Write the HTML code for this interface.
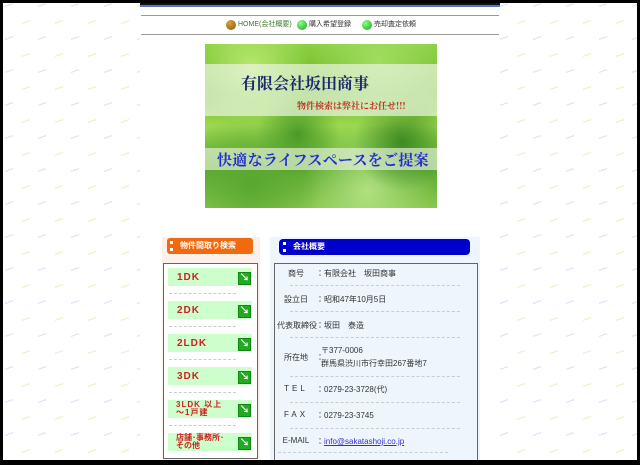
<!DOCTYPE html>
<html><head><meta charset="utf-8"><style>
*{margin:0;padding:0;box-sizing:border-box}
body{width:640px;height:465px;position:relative;overflow:hidden;background:#fff;font-family:"Liberation Sans","Noto Sans CJK JP",sans-serif;font-size:8px;color:#333}
.pat{position:absolute;inset:0;background-image:
linear-gradient(160deg,transparent 40%,#dfe6f8 40%,#dfe6f8 60%,transparent 60%),
linear-gradient(160deg,transparent 40%,#e6f5cc 40%,#e6f5cc 60%,transparent 60%);
background-size:8px 4px,8px 4px;background-repeat:no-repeat;}
.a{position:absolute}
.frame{position:absolute;inset:0;border:3px solid #000;border-bottom-width:5px;pointer-events:none}
.row{position:absolute;left:168px;width:84px;height:18px;background:#ccffcc;color:#d02020;font-weight:bold;font-size:10px;padding-left:9px;line-height:19px;letter-spacing:1px}
.row.two{font-size:8px;line-height:8px;padding-top:1px}
.arr{position:absolute;right:1px;top:4px;width:13px;height:13px;background:#22aa22;border:1px solid #118811;color:#fff;font-size:10px;line-height:11px;text-align:center;letter-spacing:0}
.dl{position:absolute;left:169px;width:67px;border-top:1px dashed #ccc}
.dr{position:absolute;left:290px;width:170px;border-top:1px dashed #ccc}
.lab{position:absolute;width:40px;text-align:center;left:276px}
.v{position:absolute;left:316px}
</style></head><body>
<div id="bg" class="pat"></div>
<div class="a" style="left:140px;top:0;width:360px;height:465px;background:#fff"></div>
<div class="a" style="left:140px;top:3px;width:360px;height:2px;background:#111"></div>
<div class="a" style="left:140px;top:5px;width:360px;height:1px;background:#4a9a3a"></div>
<div class="a" style="left:140px;top:6px;width:360px;height:1px;background:#6070d0"></div>
<div class="a" style="left:141px;top:15px;width:358px;height:1px;background:#999"></div>
<div class="a" style="left:141px;top:34px;width:358px;height:1px;background:#999"></div>
<div class="a" style="left:226px;top:20px;width:10px;height:10px;border-radius:50%;background:radial-gradient(circle at 35% 30%,#d8a040,#8a5a00)"></div>
<div class="a" style="left:238px;top:20px;font-size:7px;color:#3a7a2a;line-height:10px">HOME(会社概要)</div>
<div class="a" style="left:297px;top:20px;width:10px;height:10px;border-radius:50%;background:radial-gradient(circle at 35% 30%,#8f8,#1a1)"></div>
<div class="a" style="left:309px;top:20px;font-size:7px;line-height:10px">購入希望登録</div>
<div class="a" style="left:362px;top:20px;width:10px;height:10px;border-radius:50%;background:radial-gradient(circle at 35% 30%,#8f8,#1a1)"></div>
<div class="a" style="left:374px;top:20px;font-size:7px;line-height:10px">売却査定依頼</div>
<!-- banner -->
<div class="a" style="left:205px;top:44px;width:232px;height:164px;overflow:hidden;background:
radial-gradient(circle at 20% 15%,#b8e870 0,transparent 25%),
radial-gradient(circle at 75% 10%,#a0dc60 0,transparent 30%),
radial-gradient(circle at 40% 55%,#4a9a28 0,transparent 25%),
radial-gradient(circle at 85% 60%,#3e8a22 0,transparent 22%),
radial-gradient(circle at 20% 85%,#5aa830 0,transparent 30%),
radial-gradient(circle at 70% 90%,#b0e080 0,transparent 30%),
linear-gradient(180deg,#8cd040,#6ab828 30%,#9cd850 50%,#5aa830 75%,#8ac850)">
<div class="a" style="left:0;top:20px;width:232px;height:52px;background:rgba(235,245,225,.7)"></div>
<div class="a" style="left:0;top:104px;width:232px;height:22px;background:rgba(235,245,225,.65)"></div>
<div class="a" style="left:36px;top:27px;font-family:'Liberation Serif','Noto Serif CJK SC',serif;font-weight:bold;font-size:16px;color:#1a2a6a;white-space:nowrap">有限会社坂田商事</div>
<div class="a" style="left:92px;top:55px;font-family:'Noto Serif CJK SC',serif;font-weight:bold;font-size:9px;color:#c03020;white-space:nowrap">物件検索は弊社にお任せ!!!</div>
<div class="a" style="left:12px;top:105px;font-family:'Noto Serif CJK SC',serif;font-weight:bold;font-size:15px;color:#2030d0;white-space:nowrap;letter-spacing:.3px">快適なライフスペースをご提案</div>
</div>
<!-- left -->
<div class="a" style="left:162px;top:237px;width:98px;height:228px;background:#fdf0ea"></div>
<div class="a" style="left:167px;top:238px;width:86px;height:16px;background:#f06a10;border-radius:3px;color:#fff;font-weight:bold;font-size:8px;line-height:16px;padding-left:13px">物件間取り検索</div>
<div class="a" style="left:170px;top:241px;width:3px;height:3px;background:#fff"></div>
<div class="a" style="left:170px;top:248px;width:3px;height:3px;background:#fff"></div>
<div class="a" style="left:163px;top:263px;width:95px;height:196px;border:1px solid #666;background:#fff"></div>
<div class="row" style="top:268px">1DK<div class="arr">↘</div></div>
<div class="dl" style="top:293px"></div>
<div class="row" style="top:301px">2DK<div class="arr">↘</div></div>
<div class="dl" style="top:326px"></div>
<div class="row" style="top:334px">2LDK<div class="arr">↘</div></div>
<div class="dl" style="top:359px"></div>
<div class="row" style="top:367px">3DK<div class="arr">↘</div></div>
<div class="dl" style="top:392px"></div>
<div class="row two" style="top:400px;padding-left:8px">3LDK 以上<br>～1戸建<div class="arr">↘</div></div>
<div class="dl" style="top:425px"></div>
<div class="row two" style="top:433px;padding-left:8px;letter-spacing:0">店舗･事務所･<br>その他<div class="arr">↘</div></div>
<!-- right -->
<div class="a" style="left:270px;top:237px;width:210px;height:228px;background:#eef5fc"></div>
<div class="a" style="left:279px;top:239px;width:191px;height:16px;background:#0000cc;border-radius:4px;color:#fff;font-weight:bold;font-size:8px;line-height:16px;padding-left:14px">会社概要</div>
<div class="a" style="left:283px;top:242px;width:3px;height:3px;background:#fff"></div>
<div class="a" style="left:283px;top:249px;width:3px;height:3px;background:#fff"></div>
<div class="a" style="left:274px;top:263px;width:204px;height:202px;border:1px solid #666;border-bottom:none"></div>
<div class="lab" style="top:268px">商号</div><div class="v" style="top:268px">：有限会社　坂田商事</div>
<div class="dr" style="top:285px"></div>
<div class="lab" style="top:294px">設立日</div><div class="v" style="top:294px">：昭和47年10月5日</div>
<div class="dr" style="top:311px"></div>
<div class="lab" style="top:320px;left:277px;width:40px;white-space:nowrap;text-align:left">代表取締役</div><div class="v" style="top:320px">：坂田　泰造</div>
<div class="dr" style="top:337px"></div>
<div class="lab" style="top:352px">所在地</div><div class="v" style="top:352px">：</div>
<div class="a" style="left:321px;top:345px">〒377-0006</div>
<div class="a" style="left:321px;top:358px">群馬県渋川市行幸田267番地7</div>
<div class="dr" style="top:376px"></div>
<div class="lab" style="top:384px;letter-spacing:3px">TEL</div><div class="v" style="top:384px">：0279-23-3728(代)</div>
<div class="dr" style="top:402px"></div>
<div class="lab" style="top:410px;letter-spacing:3px">FAX</div><div class="v" style="top:410px">：0279-23-3745</div>
<div class="dr" style="top:428px"></div>
<div class="lab" style="top:436px">E-MAIL</div><div class="v" style="top:436px">：<span style="color:#3333cc;text-decoration:underline">info@sakatashoji.co.jp</span></div>
<div class="a" style="left:278px;top:452px;width:170px;border-top:1px dashed #ccc"></div>
<div class="frame"></div>
<script>
var bg=document.getElementById('bg');
var s=getComputedStyle(bg).backgroundImage.split(/,(?=\s*linear)/);
var imgs=[],pos=[];
for(var y=0;y<480;y+=33)for(var x=0;x<660;x+=33){imgs.push(s[0]);pos.push((x+5)+'px '+(y+3)+'px');imgs.push(s[1]);pos.push((x+22)+'px '+(y+20)+'px');}
bg.style.backgroundImage=imgs.join(',');bg.style.backgroundPosition=pos.join(',');
bg.style.backgroundSize=imgs.map(function(){return '8px 4px'}).join(',');
bg.style.backgroundRepeat=imgs.map(function(){return 'no-repeat'}).join(',');
</script>
</body></html>
